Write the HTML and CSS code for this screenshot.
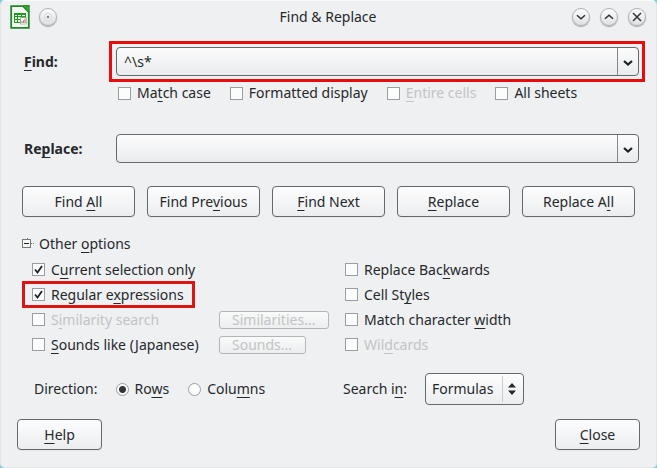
FILE: index.html
```html
<!DOCTYPE html>
<html lang="en">
<head>
<meta charset="utf-8">
<title>Find &amp; Replace</title>
<link rel="stylesheet" href="styles.css">
</head>
<body>
<form class="dialog">
  <header class="titlebar">
    <div class="title-left">
      <svg class="doc-icon" viewBox="0 0 20 24" aria-hidden="true">
        <path d="M1.2 1.2H13L18.8 7V22.8H1.2Z" fill="#f4faf1" stroke="#22862a" stroke-width="1.8"/>
        <path d="M12.5 0H19.7V7.5Z" fill="#22862a"/>
        <path d="M13.5 1H17Q19 1 19 3V6.500Z" fill="#36a82c"/>
        <rect x="4" y="8" width="12" height="10" fill="#239a22"/>
        <path d="M5 10h2v1H5zM8 10h3v1H8zM12 10h3v1h-3zM5 12h2v2H5zM8 12h3v2H8zM5 15h2v2H5zM8 15h2v2H8z" fill="#e9f8e5"/>
        <rect x="10.500" y="12.500" width="6" height="6.500" fill="#fff" stroke="#8c9c8c" stroke-width=".6"/>
        <path d="M11.500 16h1v2h-1z" fill="#4a83b8"/><path d="M13 15h1v3h-1z" fill="#dd8a45"/><path d="M14.500 13.500h1V18h-1z" fill="#c45b5b"/>
      </svg>
      <button type="button" class="round" aria-label="Window menu"><svg viewBox="0 0 18 18"><circle cx="9" cy="9" r="4.500" stroke="#d6d8d9" stroke-width="1"/><circle cx="9" cy="9" r="1.300" fill="#777b7e" stroke="none"/></svg></button>
    </div>
    <h1>Find &amp; Replace</h1>
    <div class="title-right">
      <button type="button" class="round" aria-label="Minimize"><svg viewBox="0 0 18 18"><path d="M4.500 7 9 11l4.500-4"/></svg></button>
      <button type="button" class="round" aria-label="Maximize"><svg viewBox="0 0 18 18"><path d="M4.500 11 9 7l4.500 4"/></svg></button>
      <button type="button" class="round" aria-label="Close window"><svg viewBox="0 0 18 18"><path d="m4.500 4.500 9 9M13.500 4.500l-9 9"/></svg></button>
    </div>
  </header>

  <main>
    <div class="field">
      <label class="name" for="find"><u>F</u>ind:</label>
      <div class="marked">
        <div class="combo">
          <input id="find" type="text" value="^\s*">
          <button type="button" aria-label="Find history"><svg viewBox="0 0 10 8"><path d="M1 2 5 5.500 9 2"/></svg></button>
        </div>
      </div>
    </div>
    <div class="flags">
      <label class="check"><input type="checkbox"><span>Ma<u>t</u>ch case</span></label>
      <label class="check"><input type="checkbox"><span>Formatted display</span></label>
      <label class="check off"><input type="checkbox" disabled><span><u>E</u>ntire cells</span></label>
      <label class="check"><input type="checkbox"><span>All sheets</span></label>
    </div>
    <div class="field replace">
      <label class="name" for="replace">Re<u>p</u>lace:</label>
      <div class="combo">
        <input id="replace" type="text">
        <button type="button" aria-label="Replace history"><svg viewBox="0 0 10 8"><path d="M1 2 5 5.500 9 2"/></svg></button>
      </div>
    </div>

    <div class="actions">
      <button type="button" class="push">Find&nbsp;<u>A</u>ll</button>
      <button type="button" class="push">Find Pre<u>v</u>ious</button>
      <button type="button" class="push"><u>F</u>ind Next</button>
      <button type="button" class="push"><u>R</u>eplace</button>
      <button type="button" class="push">Replace A<u>l</u>l</button>
    </div>

    <button type="button" class="expander" aria-expanded="true">
      <svg viewBox="0 0 13 13" aria-hidden="true"><path d="M5.500 0v1M9 5.500h3" stroke="#777" stroke-dasharray="1 1"/><rect x=".5" y="1.500" width="8" height="8" fill="#f7f8f8" stroke="#777"/><path d="M2 5.500h5" stroke="#222"/></svg>
      <span>Other <u>o</u>ptions</span>
    </button>

    <div class="options">
      <label class="check"><input type="checkbox" checked><span>C<u>u</u>rrent selection only</span></label>
      <label class="check right"><input type="checkbox"><span>Replace Bac<u>k</u>wards</span></label>
      <label class="check boxed"><input type="checkbox" checked><span>Regular e<u>x</u>pressions</span></label>
      <label class="check right"><input type="checkbox"><span>Cell St<u>y</u>les</span></label>
      <label class="check off"><input type="checkbox" disabled><span>S<u>i</u>milarity search</span></label>
      <button type="button" class="mini" disabled>Similarities...</button>
      <label class="check right"><input type="checkbox"><span>Match character <u>w</u>idth</span></label>
      <label class="check"><input type="checkbox"><span><u>S</u>ounds like (Japanese)</span></label>
      <button type="button" class="mini" disabled>Sounds...</button>
      <label class="check right off"><input type="checkbox" disabled><span>Wil<u>d</u>cards</span></label>
    </div>

    <div class="search">
      <div class="direction" role="radiogroup" aria-labelledby="direction">
        <span id="direction" class="caption">Direction:</span>
        <label class="check"><input type="radio" name="direction" checked><span>Ro<u>w</u>s</span></label>
        <label class="check"><input type="radio" name="direction"><span>Colu<u>m</u>ns</span></label>
      </div>
      <label class="caption" for="scope">Search i<u>n</u>:</label>
      <div class="picker">
        <select id="scope"><option>Formulas</option></select>
        <svg viewBox="0 0 8 12" aria-hidden="true"><path d="M4 0 8 4.500H0ZM4 12 0 7.500h8Z" fill="#24272a"/></svg>
      </div>
    </div>
  </main>

  <footer>
    <button type="button" class="push"><u>H</u>elp</button>
    <button type="button" class="push"><u>C</u>lose</button>
  </footer>
</form>
</body>
</html>
```
FILE: styles.css
```css
* { box-sizing: border-box; }

body {
  margin: 0;
  background: #7fcbe0;
  color: #26292c;
  font: 14px/20px "Noto Sans", sans-serif;
}

button, input, select { font: inherit; color: inherit; margin: 0; }
button { padding: 0; }
u { text-decoration: underline; text-decoration-thickness: 1px; text-underline-offset: 3px; text-decoration-skip-ink: none; }

.dialog {
  min-height: 100vh;
  background: #eff0f1;
  border: 1px solid #e3e6e7;
  border-top-color: #f8f9f9;
  border-radius: 5px;
}

.titlebar {
  display: grid;
  grid-template-columns: 1fr auto 1fr;
  align-items: center;
  height: 31px;
  padding: 0 10px 0 9px;
}
h1 { margin: 0; font-size: 14px; font-weight: 400; }
.title-left, .title-right { display: flex; align-items: center; gap: 10px; }
.title-left { gap: 9px; }
.title-right { justify-content: flex-end; }
.doc-icon { width: 20px; height: 24px; }
.round {
  width: 18px;
  height: 18px;
  border: 1px solid #b0b3b5;
  border-radius: 50%;
  background: linear-gradient(#fdfdfd, #dfe0e1);
  box-shadow: 0 1px 1px #a0a2a4;
}
.round svg { display: block; width: 16px; height: 16px; fill: none; stroke: #303438; stroke-width: 1.700; }

main { padding: 9px 11px 0 23px; }

.field { display: grid; grid-template-columns: 85px 1fr; align-items: center; }
.name { font-weight: 700; }
.marked { border: 3px solid #e80c0c; padding: 3px 3px 3px 4px; }
.combo {
  display: flex;
  height: 29px;
  border: 1px solid #65696d;
  border-radius: 4px;
  background: linear-gradient(#fcfcfd, #e9ebec);
  overflow: hidden;
}
.combo input { flex: 1; min-width: 0; border: 0; background: none; padding: 0 7px; outline: 0; }
.combo button { width: 21px; border: 0; border-left: 1px solid #85888b; background: none; }
.combo svg { display: block; width: 10px; height: 8px; margin: 3px auto 0; fill: none; stroke: #1d2023; stroke-width: 2.200; }

.flags { display: flex; gap: 19px; margin: 1px 0 31px 94px; }
.replace { grid-template-columns: 92px 1fr; margin-right: 6px; }

.check { display: flex; align-items: center; gap: 6px; white-space: nowrap; }
.check input {
  appearance: none;
  flex: none;
  width: 13px;
  height: 13px;
  border: 1px solid #9b9ea0;
  background: #fbfcfc;
}
.check input[type="checkbox"]:checked {
  background-image: url("data:image/svg+xml,%3Csvg xmlns='http://www.w3.org/2000/svg' viewBox='0 0 11 11'%3E%3Cpath d='M2 5.500 4.500 8.500 9 2' fill='none' stroke='%23202326' stroke-width='1.800'/%3E%3C/svg%3E");
}
.check input[type="radio"] { border-radius: 50%; }
.check input[type="radio"]:checked { background: radial-gradient(circle, #33373a 3px, #fbfcfc 4px); }
.off { color: #c1c4c6; }

.push {
  height: 31px;
  border: 1px solid #65696d;
  border-radius: 4px;
  background: linear-gradient(#fdfdfe, #ebedee);
  box-shadow: 0 1px 0 #e4e6e7;
}
.actions { display: grid; grid-template-columns: repeat(5, 1fr); gap: 12px; margin: 23px 10px 17px -2px; }

.expander { display: flex; align-items: center; gap: 4px; border: 0; background: none; margin-left: -2px; }
.expander svg { width: 13px; height: 13px; }

.options {
  display: grid;
  grid-template-columns: 187px 126px 1fr;
  grid-auto-rows: 25px;
  align-items: center;
  margin: 3px 0 16px 8px;
}
.right { grid-column: 3; }
.options > .check { justify-self: start; }
.boxed { position: relative; }
.boxed::after {
  content: "";
  position: absolute;
  inset: -4px -11px -3px -10px;
  border: 3px solid #dc1414;
}
.mini {
  justify-self: start;
  height: 18px;
  padding: 0 13px 0 12px;
  border: 1px solid #b3b6b8;
  border-radius: 3px;
  background: linear-gradient(#f9fafa, #eceeef);
  color: #c1c4c6;
  line-height: 16px;
}

.search { display: grid; grid-template-columns: 309px 82px auto 1fr; align-items: center; margin-left: 10px; }
.direction { display: flex; align-items: center; }
.direction .check:nth-child(2) { margin: 0 19px 0 18px; }
.picker { position: relative; }
.picker select {
  appearance: none;
  display: block;
  width: 99px;
  height: 32px;
  padding: 0 6px;
  border: 1px solid #65696d;
  border-radius: 4px;
  background: linear-gradient(#c9cccd, #c9cccd) 76px 2px / 1px 26px no-repeat, linear-gradient(#fdfdfe, #ebedee);
}
.picker svg { position: absolute; right: 8px; top: 10px; width: 8px; height: 12px; pointer-events: none; }

footer { display: flex; justify-content: space-between; padding: 14px 16px 16px; }
footer .push { width: 85px; }
```
